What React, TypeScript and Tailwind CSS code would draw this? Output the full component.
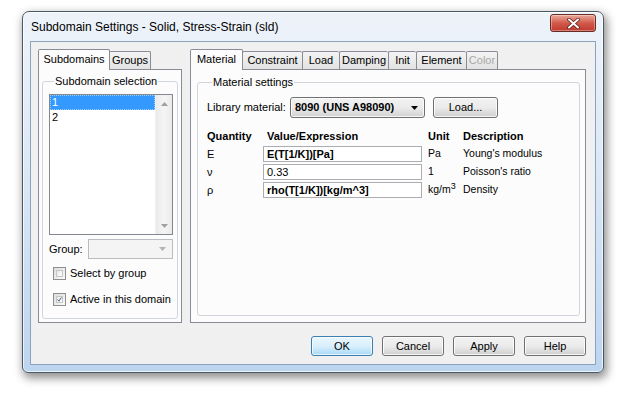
import React from "react";
import clsx from "clsx";

interface TabProps {
  label: string;
  w: string;
  active?: boolean;
  disabled?: boolean;
  last?: boolean;
}

const Tab: React.FC<TabProps> = ({ label, w, active = false, disabled = false, last = false }) => (
  <div
    className={clsx(
      "flex items-center justify-center border-l border-t border-[#898c95] rounded-t-[2px] leading-none",
      w,
      active
        ? "relative z-10 h-[21px] -mb-px -mr-px border-r bg-[#fcfcfc] pb-[2px]"
        : "h-[18px] bg-gradient-to-b from-[#f4f4f4] to-[#e2e2e2]",
      last && "border-r",
      disabled ? "text-[#a8a8a8]" : "text-black"
    )}
  >
    {label}
  </div>
);

const Checkbox: React.FC<{ checked?: boolean; label: string; className?: string }> = ({ checked, label, className }) => (
  <div className={clsx("h-[13px] flex items-center gap-[4px] ml-[4px]", className)}>
    <div className="w-[13px] h-[13px] border border-[#8f8f8f] bg-gradient-to-br from-[#dcdcdc] to-[#fbfbfb] p-[2px]">
      <div className="w-full h-full border border-[#c6c6c6] bg-gradient-to-br from-[#e8e8e8] to-[#ffffff] flex items-center justify-center">
        {checked && (
          <svg width="9" height="9" viewBox="0 0 9 9" className="-mt-[1px]">
            <path d="M1 4.5 L3.5 7.5 L8 0.8" fill="none" stroke="#4a5c8c" strokeWidth="1.8" />
          </svg>
        )}
      </div>
    </div>
    <span className="leading-[13px]">{label}</span>
  </div>
);

const Button: React.FC<{ label: string; focused?: boolean; className?: string }> = ({ label, focused, className }) => (
  <div
    className={clsx(
      "flex items-center justify-center rounded-[3px] border",
      focused
        ? "border-[#3c7fb1] bg-gradient-to-b from-[#eaf6fd] via-[#d9f0fc] to-[#a7d9f5] shadow-[inset_0_0_0_1px_rgba(255,255,255,0.7)]"
        : "border-[#707070] bg-gradient-to-b from-[#f2f2f2] via-[#ebebeb] to-[#cfcfcf] shadow-[inset_0_0_0_1px_rgba(255,255,255,0.8)]",
      className
    )}
  >
    {label}
  </div>
);

const DownArrow: React.FC<{ color?: string }> = ({ color = "#000" }) => (
  <svg width="7" height="4" viewBox="0 0 7 4">
    <path d="M0 0 H7 L3.5 4 Z" fill={color} />
  </svg>
);

export default function App() {
  return (
    <div className="w-[619px] h-[395px] overflow-hidden bg-white pl-[22px] pt-[11px] text-[11px] text-black [font-family:'Liberation_Sans',Arial,sans-serif]">
      <div className="w-[582px] h-[362px] flex flex-col rounded-t-[7px] rounded-b-[6px] border border-[#4d5866] bg-gradient-to-b from-[#eef3fa] via-[#d8e6f5] to-[#bcd5ef] shadow-[inset_0_0_0_1px_rgba(255,255,255,0.7),2px_4px_10px_1px_rgba(0,0,0,0.45)]">
        {/* title bar */}
        <div className="h-[29px] flex items-start pl-[8px] pr-[7px]">
          <div className="flex-1 h-full flex items-center text-[12px] text-black">
            Subdomain Settings - Solid, Stress-Strain (sld)
          </div>
          <div className="mt-[2px] w-[46px] h-[18px] rounded-[3px] border border-[#6b2b25] bg-gradient-to-b from-[#eaa99c] via-[#d15a4b] to-[#c0392d] shadow-[inset_0_0_0_1px_rgba(255,255,255,0.35)] flex items-center justify-center">
            <svg width="13" height="11" viewBox="0 0 13 11">
              <path d="M2 1.5 L11 9.5 M11 1.5 L2 9.5" stroke="#5c1e18" strokeWidth="3.6" strokeLinecap="round" />
              <path d="M2 1.5 L11 9.5 M11 1.5 L2 9.5" stroke="#ffffff" strokeWidth="2" strokeLinecap="round" />
            </svg>
          </div>
        </div>

        {/* client area */}
        <div className="mx-[7px] mb-[7px] flex-1 flex flex-col border border-[#8ba2bc] bg-[#f0f0f0] pl-[7px] pr-[9px] pt-[7px] pb-[8px]">
          <div className="flex gap-[8px]">
            {/* left tab control */}
            <div className="w-[144px] flex flex-col">
              <div className="h-[20px] flex items-end">
                <Tab label="Subdomains" w="w-[72px]" active />
                <Tab label="Groups" w="w-[42px]" last />
              </div>
              <div className="h-[254px] flex flex-col border border-[#898c95] bg-[#fcfcfc]">
                <fieldset className="mx-[3px] mt-[4px] mb-[3px] flex-1 flex flex-col rounded-[3px] border border-[#d0d6db] pl-[6px] pr-[4px]">
                  <legend className="ml-[5px] px-[1px] leading-[14px]">Subdomain selection</legend>
                  <div className="mt-[6px] h-[141px] flex border border-[#828790] bg-white">
                    <div className="flex-1 flex flex-col">
                      <div className="h-[15px] bg-[#3399ff] text-white pl-[1px] leading-[13px] border border-dotted border-[#9fcfff]">1</div>
                      <div className="h-[15px] pl-[2px] leading-[15px]">2</div>
                    </div>
                    <div className="w-[17px] flex flex-col bg-gradient-to-r from-[#eaeaea] via-[#f5f5f5] to-[#eaeaea] border-l border-[#f0f0f0]">
                      <div className="h-[17px] flex items-center justify-center">
                        <svg width="7" height="4" viewBox="0 0 7 4">
                          <path d="M0 4 L3.5 0 L7 4 Z" fill="#a0a0a0" />
                        </svg>
                      </div>
                      <div className="flex-1" />
                      <div className="h-[17px] flex items-center justify-center">
                        <DownArrow color="#a0a0a0" />
                      </div>
                    </div>
                  </div>
                  <div className="mt-[4px] h-[20px] flex items-center justify-between">
                    <span>Group:</span>
                    <div className="w-[85px] h-[20px] border border-[#b9bdc1] bg-[#f4f4f4] flex items-center justify-end pr-[6px]">
                      <DownArrow color="#b5b5b5" />
                    </div>
                  </div>
                  <Checkbox label="Select by group" className="mt-[8px]" />
                  <Checkbox label="Active in this domain" checked className="mt-[13px]" />
                </fieldset>
              </div>
            </div>

            {/* right tab control */}
            <div className="w-[396px] flex flex-col">
              <div className="h-[20px] flex items-end">
                <Tab label="Material" w="w-[53px]" active />
                <Tab label="Constraint" w="w-[60px]" />
                <Tab label="Load" w="w-[37px]" />
                <Tab label="Damping" w="w-[49px]" />
                <Tab label="Init" w="w-[28px]" />
                <Tab label="Element" w="w-[50px]" />
                <Tab label="Color" w="w-[32px]" disabled last />
              </div>
              <div className="h-[254px] flex flex-col border border-[#898c95] bg-[#fcfcfc]">
                <fieldset className="ml-[6px] mr-[5px] mt-[5px] mb-[6px] flex-1 flex flex-col rounded-[3px] border border-[#d0d6db] pl-[9px]">
                  <legend className="ml-[5px] px-[1px] leading-[14px]">Material settings</legend>
                  <div className="mt-[8px] h-[21px] flex items-center">
                    <span className="w-[83px]">Library material:</span>
                    <div className="w-[135px] h-[21px] rounded-[3px] border border-[#707070] bg-gradient-to-b from-[#f2f2f2] via-[#ebebeb] to-[#d2d2d2] shadow-[inset_0_0_0_1px_rgba(255,255,255,0.8)] flex items-center pl-[4px] pr-[6px]">
                      <span className="flex-1 font-bold">8090 (UNS A98090)</span>
                      <DownArrow />
                    </div>
                    <Button label="Load..." className="ml-[8px] w-[65px] h-[21px]" />
                  </div>

                  <div className="mt-[10px] flex flex-col gap-[2px]">
                    <div className="h-[16px] grid grid-cols-[56px_165px_35px_1fr] items-center font-bold">
                      <span>Quantity</span>
                      <span className="pl-[4px]">Value/Expression</span>
                      <span>Unit</span>
                      <span>Description</span>
                    </div>
                    {[
                      { q: "E", v: "E(T[1/K])[Pa]", bold: true, unit: <>Pa</>, d: "Young's modulus" },
                      { q: "ν", v: "0.33", bold: false, unit: <>1</>, d: "Poisson's ratio" },
                      { q: "ρ", v: "rho(T[1/K])[kg/m^3]", bold: true, unit: <>kg/m<sup className="text-[9px] -top-[4px]">3</sup></>, d: "Density" },
                    ].map((row) => (
                      <div key={row.q} className="h-[16px] grid grid-cols-[56px_165px_35px_1fr] items-center">
                        <span>{row.q}</span>
                        <div className={clsx("w-[159px] h-[16px] border border-[#abadb3] bg-white pl-[3px] leading-[14px]", row.bold && "font-bold")}>
                          {row.v}
                        </div>
                        <span className="text-[10.5px]">{row.unit}</span>
                        <span className="text-[10.5px]">{row.d}</span>
                      </div>
                    ))}
                  </div>
                </fieldset>
              </div>
            </div>
          </div>

          <div className="mt-[13px] flex justify-end gap-[9px]">
            <Button label="OK" focused className="w-[62px] h-[20px]" />
            <Button label="Cancel" className="w-[62px] h-[20px]" />
            <Button label="Apply" className="w-[62px] h-[20px]" />
            <Button label="Help" className="w-[62px] h-[20px]" />
          </div>
        </div>
      </div>
    </div>
  );
}
